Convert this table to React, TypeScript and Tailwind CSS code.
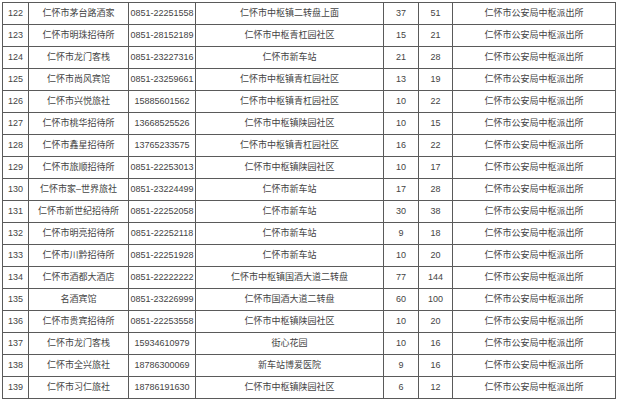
import React from 'react';

const rows: [string, string, string, string, string, string][] = [
  ['122', '仁怀市茅台路酒家', '0851-22251558', '仁怀市中枢镇二转盘上面', '37', '51'],
  ['123', '仁怀市明珠招待所', '0851-28152189', '仁怀市中枢青杠园社区', '15', '21'],
  ['124', '仁怀市龙门客栈', '0851-23227316', '仁怀市新车站', '21', '28'],
  ['125', '仁怀市尚风宾馆', '0851-23259661', '仁怀市中枢镇青杠园社区', '13', '19'],
  ['126', '仁怀市兴悦旅社', '15885601562', '仁怀市中枢镇青杠园社区', '10', '22'],
  ['127', '仁怀市桃华招待所', '13668525526', '仁怀市中枢镇陕园社区', '10', '15'],
  ['128', '仁怀市鑫星招待所', '13765233575', '仁怀市中枢镇青杠园社区', '16', '22'],
  ['129', '仁怀市旅顺招待所', '0851-22253013', '仁怀市中枢镇陕园社区', '10', '17'],
  ['130', '仁怀市家–世界旅社', '0851-23224499', '仁怀市新车站', '17', '28'],
  ['131', '仁怀市新世纪招待所', '0851-22252058', '仁怀市新车站', '30', '38'],
  ['132', '仁怀市明亮招待所', '0851-22252118', '仁怀市新车站', '9', '18'],
  ['133', '仁怀市川黔招待所', '0851-22251928', '仁怀市新车站', '10', '20'],
  ['134', '仁怀市酒都大酒店', '0851-22222222', '仁怀市中枢镇国酒大道二转盘', '77', '144'],
  ['135', '名酒宾馆', '0851-23226999', '仁怀市国酒大道二转盘', '60', '100'],
  ['136', '仁怀市贵宾招待所', '0851-22253558', '仁怀市中枢镇陕园社区', '10', '20'],
  ['137', '仁怀市龙门客栈', '15934610979', '街心花园', '10', '16'],
  ['138', '仁怀市全兴旅社', '18786300069', '新车站博爱医院', '9', '16'],
  ['139', '仁怀市习仁旅社', '18786191630', '仁怀市中枢镇陕园社区', '6', '12'],
];

const station = '仁怀市公安局中枢派出所';

export default function App() {
  return (
    <div className="w-[620px] h-[401px] bg-white overflow-hidden pt-[2px] pl-[2px]">
      <div
        className="grid grid-cols-[26px_100px_67px_188px_35px_34px_163px] border-l border-t border-[#5a5a5a] w-[614px] text-[9px] text-[#444]"
        style={{ fontFamily: '"Liberation Sans", "Noto Sans CJK SC", sans-serif' }}
      >
        {rows.map((r) => (
          <React.Fragment key={r[0]}>
            {[...r, station].map((cell, i) => (
              <div
                key={i}
                className="h-[22px] flex items-center justify-center whitespace-nowrap border-r border-b border-[#5a5a5a]"
              >
                {cell}
              </div>
            ))}
          </React.Fragment>
        ))}
      </div>
    </div>
  );
}
